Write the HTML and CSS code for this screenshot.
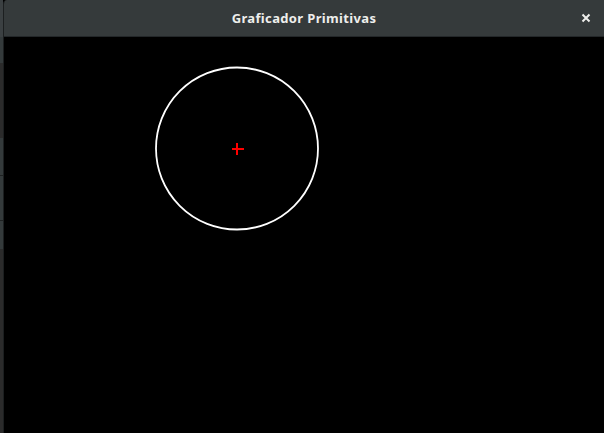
FILE: index.html
```html
<!DOCTYPE html>
<html>
<head>
<meta charset="utf-8">
<link rel="stylesheet" href="styles.css">
</head>
<body>
<div class="screen">
  <div class="side">
    <div class="seg seg-a"></div>
    <div class="seg seg-b"></div>
    <div class="seg seg-c"></div>
    <div class="seg seg-b seg-line"></div>
    <div class="seg seg-d"></div>
    <div class="seg seg-b seg-short"></div>
    <div class="seg seg-c seg-rest"></div>
  </div>
  <div class="window">
    <header class="titlebar">
      <span class="title">Graficador Primitivas</span>
      <svg class="close" width="10" height="10" viewBox="0 0 10 10">
        <path d="M1.5 1.5 L8.5 8.5 M8.5 1.5 L1.5 8.5" stroke="#eeeeec" stroke-width="2" stroke-linecap="butt"/>
      </svg>
    </header>
    <main class="canvas">
      <svg class="drawing" width="600" height="396" viewBox="0 0 600 396">
        <circle cx="233" cy="111.5" r="81" fill="none" stroke="#ffffff" stroke-width="1.8"/>
        <rect x="228" y="111" width="12" height="2" fill="#ff0000"/>
        <rect x="232" y="106" width="2" height="12" fill="#ff0000"/>
      </svg>
    </main>
  </div>
</div>
</body>
</html>
```

FILE: styles.css
```css
html, body {
  margin: 0;
  padding: 0;
  background: #000;
  width: 604px;
  height: 433px;
  overflow: hidden;
}
.screen {
  display: flex;
  width: 604px;
  height: 433px;
}
.side {
  width: 3px;
  display: flex;
  flex-direction: column;
  background: #2b2b2b;
}
.seg-a { height: 37px; background: #3b4042; }
.seg-b { height: 26px; background: #343a3b; }
.seg-c { height: 75px; background: #2b2b2b; }
.seg-line { height: 37px; border-bottom: 1px solid #1f2222; }
.seg-d { height: 44px; background: #343a3b; border-bottom: 1px solid #1f2222; }
.seg-short { height: 28px; }
.seg-rest { flex: 1; }
.window {
  flex: 1;
  display: flex;
  flex-direction: column;
  border-left: 1px solid #1c1f20;
  border-top-left-radius: 4px;
  overflow: hidden;
}
.titlebar {
  height: 36px;
  border-bottom: 1px solid #232729;
  background: #353a3b;
  display: flex;
  align-items: center;
  justify-content: center;
  position: relative;
  font-family: "Noto Sans", "DejaVu Sans", sans-serif;
  font-weight: bold;
  font-size: 13px;
  letter-spacing: 0.35px;
  color: #eeeeec;
}
.title {
  margin-left: 0;
}
.close {
  position: absolute;
  right: 13px;
  top: 13px;
}
.canvas {
  flex: 1;
  background: #000;
}
.drawing {
  display: block;
}
```
